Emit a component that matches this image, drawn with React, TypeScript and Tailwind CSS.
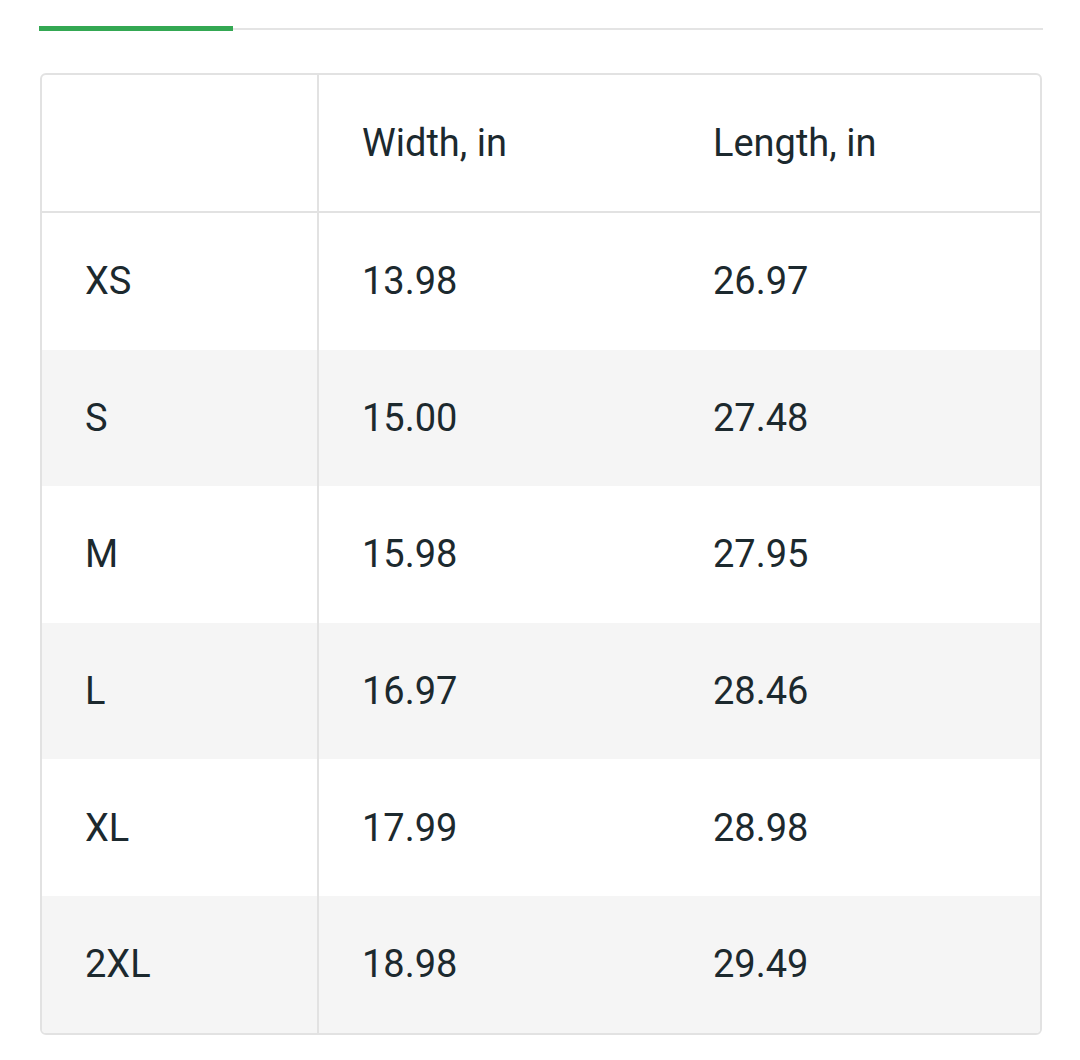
const rows = [
  ['XS', '13.98', '26.97'],
  ['S', '15.00', '27.48'],
  ['M', '15.98', '27.95'],
  ['L', '16.97', '28.46'],
  ['XL', '17.99', '28.98'],
  ['2XL', '18.98', '29.49'],
]

export default function App() {
  return (
    <div className="w-[1080px] h-[1060px] bg-white pt-[26px] pl-[39px] pr-[37px]" style={{ fontFamily: 'Roboto, "Noto Sans", sans-serif' }}>
      <div className="flex items-end">
        <div className="w-[194px] h-[5px] bg-[#34a853]" />
        <div className="flex-1 h-[2px] bg-[#e4e4e4] mb-[1px]" />
      </div>
      <div className="mt-[42px] mx-px border-2 border-[#e2e2e2] rounded-[6px] overflow-hidden text-[38px] leading-none text-[#1c292e]">
        <div className="grid grid-cols-[277px_351px_1fr] h-[138px] border-b-2 border-[#e2e2e2]">
          <div className="border-r-2 border-[#e2e2e2]" />
          <div className="flex items-center pl-[43px]">Width, in</div>
          <div className="flex items-center pl-[43px]">Length, in</div>
        </div>
        {rows.map((r, i) => (
          <div key={r[0]} className={`grid grid-cols-[277px_351px_1fr] h-[136.6px] ${i % 2 === 1 ? 'bg-[#f5f5f5]' : 'bg-white'}`}>
            <div className="flex items-center pl-[43px] border-r-2 border-[#e2e2e2]">{r[0]}</div>
            <div className="flex items-center pl-[43px]">{r[1]}</div>
            <div className="flex items-center pl-[43px]">{r[2]}</div>
          </div>
        ))}
      </div>
    </div>
  )
}
